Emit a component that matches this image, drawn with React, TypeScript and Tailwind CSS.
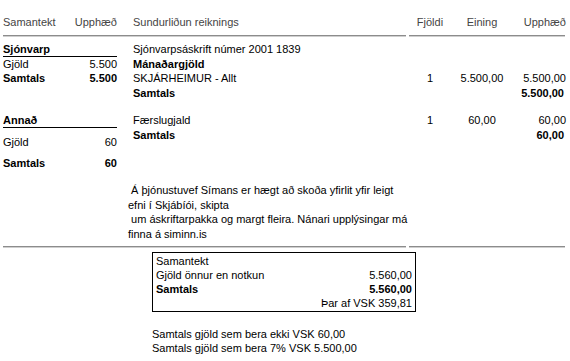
const Row = ({
  label,
  qty = "",
  unit = "",
  amount = "",
  bold = false,
}: {
  label: string;
  qty?: string;
  unit?: string;
  amount?: string;
  bold?: boolean;
}) => (
  <div className={`flex h-[14.5px] items-center ${bold ? "font-bold" : ""}`}>
    <div className="w-[276px] whitespace-nowrap">{label}</div>
    <div className="w-[42px] text-center">{qty}</div>
    <div className="w-[62px] text-center">{unit}</div>
    <div className={`w-[53px] text-right ${bold ? "pr-[2px]" : ""}`}>{amount}</div>
  </div>
);

const Divider = () => (
  <div className="flex gap-[3px]">
    <div className="h-[2px] w-[403px] border-t border-[#8c8c8c] bg-[#cfcfcf]" />
    <div className="h-[2px] w-[156px] border-t border-[#8c8c8c] bg-[#cfcfcf]" />
  </div>
);

export default function App() {
  return (
    <div
      className="w-[570px] h-[361px] bg-white px-[3px] pt-[15px] text-[11px] leading-[14px] text-black"
      style={{ fontFamily: '"Liberation Sans", Arial, sans-serif' }}
    >
      {/* header */}
      <div className="flex h-[14px] items-center text-[#444]">
        <div className="flex w-[114px] justify-between">
          <span>Samantekt</span>
          <span>Upphæð</span>
        </div>
        <div className="ml-[16px] w-[276px]">Sundurliðun reiknings</div>
        <div className="w-[42px] text-center">Fjöldi</div>
        <div className="w-[62px] text-center">Eining</div>
        <div className="w-[53px] text-right">Upphæð</div>
      </div>
      <div className="mt-[6px]">
        <Divider />
      </div>

      {/* details */}
      <div className="mt-[5px] flex">
        <div className="w-[114px]">
          <div className="flex h-[15px] items-center border-b border-black font-bold">Sjónvarp</div>
          <div className="flex h-[14px] items-center justify-between">
            <span>Gjöld</span>
            <span>5.500</span>
          </div>
          <div className="flex h-[14px] items-center justify-between font-bold">
            <span>Samtals</span>
            <span>5.500</span>
          </div>

          <div className="mt-[28px] flex h-[15px] items-center border-b border-black font-bold">Annað</div>
          <div className="mt-[7px] flex h-[14px] items-center justify-between">
            <span>Gjöld</span>
            <span>60</span>
          </div>
          <div className="mt-[7px] flex h-[14px] items-center justify-between font-bold">
            <span>Samtals</span>
            <span>60</span>
          </div>
        </div>

        <div className="ml-[16px]">
          <Row label="Sjónvarpsáskrift númer 2001 1839" />
          <Row label="Mánaðargjöld" bold />
          <Row label="SKJÁRHEIMUR - Allt" qty="1" unit="5.500,00" amount="5.500,00" />
          <Row label="Samtals" amount="5.500,00" bold />
          <div className="h-[13px]" />
          <Row label="Færslugjald" qty="1" unit="60,00" amount="60,00" />
          <Row label="Samtals" amount="60,00" bold />
        </div>
      </div>

      {/* info text */}
      <div className="mt-[13px] ml-[125px] whitespace-pre leading-[14.5px]">
        {" Á þjónustuvef Símans er hægt að skoða yfirlit yfir leigt\nefni í Skjábíói, skipta\n um áskriftarpakka og margt fleira. Nánari upplýsingar má\nfinna á siminn.is"}
      </div>
      <div className="mt-[5px]">
        <Divider />
      </div>

      {/* summary box */}
      <div className="ml-[149px] mt-[4px] w-[264px] border border-black px-[3px] pt-px pb-px">
        <div className="h-[14px]">Samantekt</div>
        <div className="flex h-[14px] justify-between">
          <span>Gjöld önnur en notkun</span>
          <span>5.560,00</span>
        </div>
        <div className="flex h-[14px] justify-between font-bold">
          <span>Samtals</span>
          <span>5.560,00</span>
        </div>
        <div className="h-[14px] text-right">Þar af VSK 359,81</div>
      </div>

      <div className="ml-[149px] mt-[15px] leading-[14px]">
        <div>Samtals gjöld sem bera ekki VSK 60,00</div>
        <div>Samtals gjöld sem bera 7% VSK 5.500,00</div>
      </div>
    </div>
  );
}
